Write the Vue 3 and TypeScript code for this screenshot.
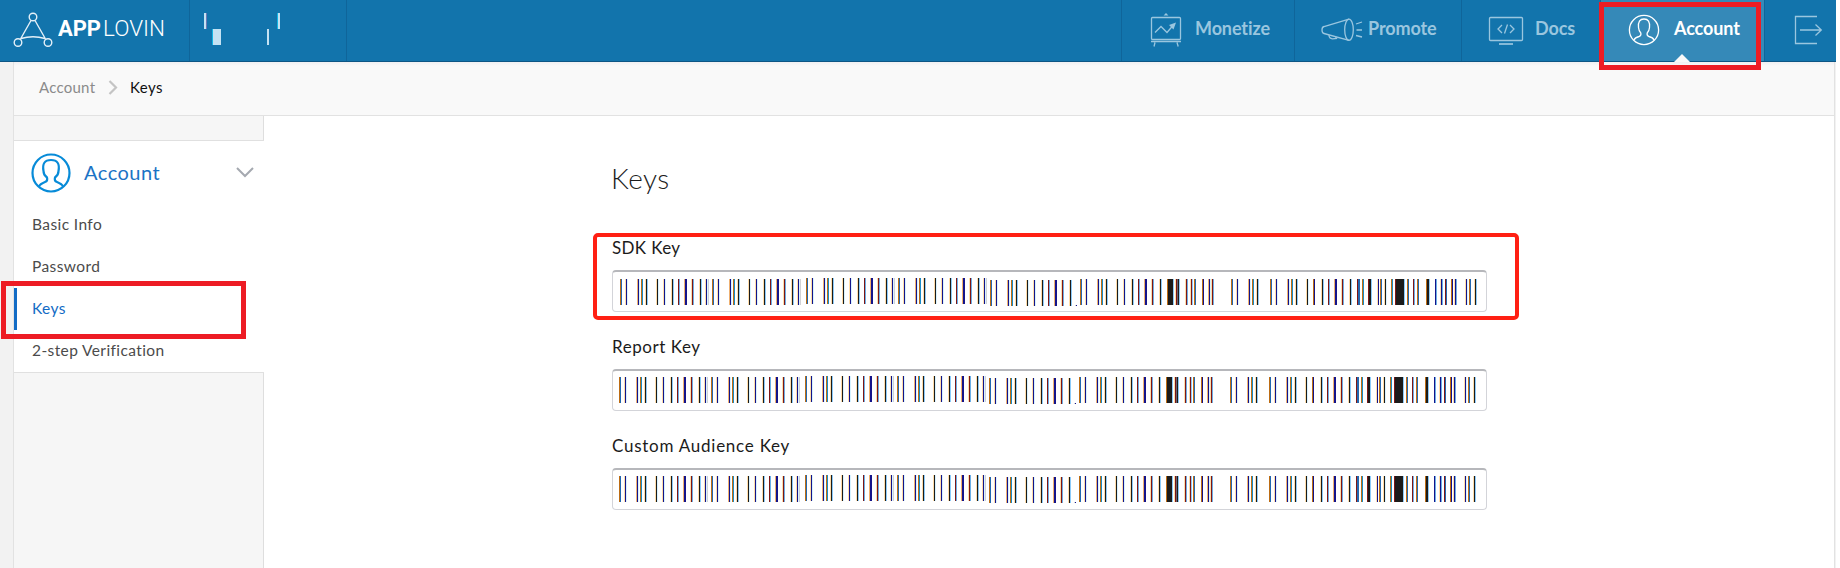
<script setup lang="ts">
type Bar = { x: number; y: number; w: number; h: number; fill: string }

const palette: Record<string, string> = {
  o: '#bd6d14', O: '#ffdca8', p: '#eeb070', n: '#14148a', k: '#1b1b1b', b: '#2468b0',
  c: '#1a8cc8', l: '#8ccbfa', y: '#d6f2ff', r: '#7e1616', t: '#6cafe6', g: '#d2d2d6', m: '#66626e',
}

const head: [number, string][] = [
  [0, 'ob'], [5, 'Ony'], [17, 'pny'], [21, 'oc'], [25, 'Okl'], [36, 'Oky'], [43, 'Ony'],
  [51, 'Okl'], [58, 'rt'], [64, 'pnn'], [71, 'Ort'], [79, 'Okl'], [85, 'Onyg'],
]
const tail: [number, string][] = [
  [547, 'okkkkkl'], [555, 'Ormkl'], [565, 'Ort'], [570, 'Orl'], [574, 'ob'], [582, 'on'],
  [588, 'pny'], [591, 'Ort'], [611, 'ob'], [616, 'Ony'], [628, 'pny'], [632, 'oc'], [636, 'Okl'],
  [650, 'ob'], [655, 'Ony'], [667, 'pny'], [671, 'oc'], [675, 'Okl'], [686, 'Oky'], [693, 'on'],
  [701, 'Okl'], [708, 'rt'], [714, 'pnn'], [721, 'Ort'], [729, 'Okl'], [737, 'rbb'], [742, 'oc'],
  [748, 'rkkl'], [757, 'On'], [760, 'ob'], [764, 'Oky'], [771, 'oc'], [775, 'rkkkkkkkkl'],
  [787, 'ob'], [793, 'rt'], [797, 'ob'], [806, 'okkl'], [815, 'nt'], [820, 'Ont'], [825, 'rb'],
  [831, 'on'], [834, 'Ont'], [845, 'Ony'], [849, 'ob'], [854, 'Okl'],
]

function makeBars(): Bar[] {
  const out: Bar[] = []
  const put = (x: number, y: number, code: string, h = 26) => {
    ;[...code].forEach((c, i) => out.push({ x: x + i, y, w: 1, h, fill: palette[c] }))
  }
  const groups: [number, number][] = [[0, 1], [92, 1], [186, 0], [278, 0], [370, 2], [460, 1]]
  groups.forEach(([x, y], gi) => {
    for (const [dx, code] of head) {
      if (gi >= 4 && dx === 85) continue
      put(x + dx, y, code)
    }
  })
  put(455, 27, 'gn', 1)
  for (const [x, code] of tail) put(x, 1, code)
  return out
}

const bars = makeBars()
const fields = [
  { label: 'SDK Key', cls: 'sdk' },
  { label: 'Report Key', cls: 'report' },
  { label: 'Custom Audience Key', cls: 'audience' },
]
const menu = [
  { label: 'Basic Info', cls: 'basic' },
  { label: 'Password', cls: 'password' },
  { label: 'Keys', cls: 'active' },
  { label: '2-step Verification', cls: 'verify' },
]
</script>

<template>
  <div class="page">
    <header class="topbar">
      <div class="brand">
        <svg width="40" height="36" viewBox="0 0 40 36" fill="none" stroke="#e4f0f8" stroke-width="1.4">
          <circle cx="20" cy="5" r="3.8" />
          <circle cx="5" cy="30.5" r="3.8" />
          <circle cx="35" cy="30.5" r="3.8" />
          <path d="M18 8.5 7.5 27M22 8.5 32.500 27M8 26.500Q20 23 32 26.500" />
        </svg>
        <svg class="wordmark" width="110" height="24" viewBox="0 0 110 24">
          <text x="0" y="19" class="word bold" textLength="43" lengthAdjust="spacingAndGlyphs">APP</text>
          <text x="45" y="19" class="word thin" textLength="62" lengthAdjust="spacingAndGlyphs">LOVIN</text>
        </svg>
      </div>
      <div class="user">
        <svg width="156" height="61" viewBox="190 0 156 61" shape-rendering="crispEdges">
          <path fill="#c4e2f3" d="M204 13h2v16h-2zM213 29h8v16h-8zM267 29h2v16h-2zM278 13h2v16h-2z" />
          <path fill="#6b78b4" d="M206 13h1v16h-1z" />
          <path fill="#10b4e4" d="M212 29h1v16h-1zM277 13h1v16h-1z" />
        </svg>
      </div>
      <nav class="nav">
        <a class="item monetize">
          <svg width="32" height="35" viewBox="0 0 32 35" fill="none" stroke="#9ac6df" stroke-width="1.3">
            <rect x="1.500" y="4.500" width="29" height="22" rx="1" />
            <path d="M1 28.500h30M5 29.500 4 33.500M27 29.500l1.200 4M5 19.500l6-6 6 6 6-7" />
            <path d="m19 12 7-2.500-2.500 7zM13.500 2.500 16 0l2.500 2.500z" fill="#9ac6df" stroke="none" />
          </svg>
          <span>Monetize</span>
        </a>
        <a class="item promote">
          <svg width="42" height="24" viewBox="0 0 42 24" fill="none" stroke="#9ac6df" stroke-width="1.3">
            <path d="M28 1.200 3 8.500Q1 9 1 12t2 3.500l25 6.800" />
            <ellipse cx="28" cy="11.800" rx="4.300" ry="10.600" />
            <path d="M8 17q0 3.500 3.500 3.800l4-.3-1-2M35 6l6-2M35.500 12H41M35 17.500l6 1.500" />
          </svg>
          <span>Promote</span>
        </a>
        <a class="item docs">
          <svg width="36" height="30" viewBox="0 0 36 30" fill="none" stroke="#9ac6df" stroke-width="1.3">
            <rect x="1.500" y="1.500" width="33" height="23" rx="1" />
            <path d="M11 28h14" stroke-width="1.700" />
            <path d="m14 9-4 4 4 4M22 9l4 4-4 4M19.500 8.500l-3 9" />
          </svg>
          <span>Docs</span>
        </a>
        <a class="item current">
          <svg width="32" height="32" viewBox="0 0 32 32" fill="none" stroke="#fff" stroke-width="1.300">
            <circle cx="16" cy="16" r="14.600" />
            <path d="M6 26q1-2.500 5-3.500 2.500-.7 1.800-3.500-2-2-2.300-5.500-.8-8.500 5.500-8.500t5.500 8.500q-.3 3.500-2.300 5.500-.7 2.800 1.800 3.500 4 1 5 3.500" />
          </svg>
          <span>Account</span>
          <i class="notch"></i>
        </a>
        <a class="item logout">
          <svg width="30" height="30" viewBox="0 0 30 30" fill="none" stroke="#9ac6df" stroke-width="1.300">
            <path d="M23 1.500H1.500v27H23M6 15h21M21.500 9.500 27.300 15l-5.800 5.500" />
          </svg>
        </a>
      </nav>
    </header>

    <div class="body">
      <div class="crumbs">
        <span class="parent">Account</span>
        <svg width="10" height="15" viewBox="0 0 10 15" fill="none" stroke="#c4c4c4" stroke-width="2.2"><path d="m1.500 1 6.500 6.500L1.500 14" /></svg>
        <span class="here">Keys</span>
      </div>
      <div class="columns">
        <aside class="side">
          <div class="panel">
            <div class="title">
              <svg width="40" height="40" viewBox="0 0 40 40" fill="none" stroke="#078bd8" stroke-width="2.2">
                <circle cx="20" cy="20" r="18.500" />
                <path d="M8 33.500q1-2.500 6-4.500 3-1 2-4.500-3.500-2.500-3.500-6.500Q10.500 7 20 7t7.500 11q0 4-3.500 6.500-1 3.500 2 4.500 5 2 6 4.500" />
              </svg>
              <span>Account</span>
              <svg class="chev" width="18" height="11" viewBox="0 0 18 11" fill="none" stroke="#a5a9b0" stroke-width="2"><path d="m1 1 8 8 8-8" /></svg>
            </div>
            <a v-for="m in menu" :key="m.label" class="link" :class="m.cls"><span>{{ m.label }}</span></a>
          </div>
        </aside>
        <main class="main">
          <h1>Keys</h1>
          <section v-for="f in fields" :key="f.label" class="field">
            <label :class="f.cls">{{ f.label }}</label>
            <div class="input" :class="f.cls">
              <svg width="860" height="30" viewBox="0 0 860 30" shape-rendering="crispEdges">
                <rect v-for="(b, i) in bars" :key="i" :x="b.x" :y="b.y" :width="b.w" :height="b.h" :fill="b.fill" />
              </svg>
            </div>
          </section>
        </main>
      </div>
    </div>

    <div class="mark mark-nav"></div>
    <div class="mark mark-side"></div>
    <div class="mark mark-sdk"></div>
  </div>
</template>

<style>
body { background: #fff; overflow: hidden; }
</style>

<style scoped>
* { box-sizing: border-box; }
.page { position: relative; width: 1840px; height: 568px; overflow: hidden; font-family: Lato, "Open Sans", sans-serif; color: #1b1b1b; }
.page svg { display: block; flex: none; }
.topbar { display: flex; width: 1836px; height: 62px; background: #1274ac; border-bottom: 1px solid #0d5685; }
.brand { display: flex; width: 190px; padding: 12px 0 0 13px; border-right: 1px solid #0f659a; }
.wordmark { margin: 5px 0 0 5px; }
.word { fill: #fff; font-size: 22px; font-family: Roboto, sans-serif; }
.bold { font-weight: 700; }
.thin { font-weight: 300; }
.user { width: 157px; border-right: 1px solid #0f659a; }
.nav { display: flex; margin-left: auto; }
.item { position: relative; display: flex; border-left: 1px solid #0f659a; color: #9ac6df; font-size: 18px; font-weight: 700; line-height: 22px; letter-spacing: -.1px; }
.item span { margin-top: 17px; white-space: nowrap; }
.monetize { width: 173px; padding-left: 28px; }
.monetize svg { margin-top: 13px; }
.monetize span { margin-left: 13px; }
.promote { width: 167px; padding-left: 26px; }
.promote svg { margin-top: 18px; }
.promote span { margin-left: 5px; }
.docs { width: 139px; padding-left: 26px; }
.docs svg { margin-top: 16px; }
.docs span { margin-left: 11px; }
.current { width: 164px; padding-left: 27px; background: #3589b8; color: #fff; }
.current svg { margin-top: 14px; }
.current span { margin-left: 14px; }
.notch { position: absolute; left: 73px; bottom: -1px; border: 8px solid transparent; border-top: 0; border-bottom-color: #f9f9f9; }
.logout { width: 72px; padding-left: 29px; }
.logout svg { margin-top: 15px; }
.body { width: 1836px; height: 506px; padding-left: 13px; background: #f2f2f2; }
.crumbs { display: flex; align-items: center; width: 1822px; height: 54px; padding: 0 0 2px 25px; background: linear-gradient(#f0f0f2, #f9f9f9 4px); border: solid #e2e2e2; border-width: 0 1px 1px; font-size: 15px; }
.crumbs span { position: relative; margin-bottom: 2px; }
.parent { width: 69px; color: #8b8b8b; letter-spacing: .25px; }
.here { margin-left: 12px; color: #111; letter-spacing: .4px; }
.columns { display: flex; width: 1822px; height: 452px; border: solid #e2e2e2; border-width: 0 1px; }
.side { width: 250px; padding-top: 24px; background: linear-gradient(#dedede, #dedede) right / 1px 100% no-repeat #f6f6f6; }
.panel { height: 233px; background: #fff; border: solid #e0e0e0; border-width: 1px 0; }
.title { display: flex; align-items: center; height: 63px; padding-left: 17px; color: #1b73c5; font-size: 20px; }
.title span { width: 152px; margin: 0 0 2px 13px; letter-spacing: .5px; }
.link { display: flex; align-items: center; height: 42px; padding: 0 0 2px 18px; color: #4b4b4b; font-size: 15.5px; letter-spacing: .4px; }
.active { padding-left: 15px; border-left: 3px solid #126bc5; color: #126bc5; }
.main { flex: 1; padding: 43px 0 0 348px; background: #fff; }
h1 { height: 73px; margin: 0 0 0 -1px; font-size: 28px; font-weight: 300; line-height: 38px; letter-spacing: .5px; }
.field { height: 99px; }
label { display: block; height: 38px; font-size: 17px; line-height: 32px; }
label.sdk { letter-spacing: .35px; }
label.report { letter-spacing: .55px; }
label.audience { letter-spacing: .75px; }
.input { width: 875px; height: 42px; border: 1px solid #d3d4d9; border-top: 2px solid #b6b7bb; border-radius: 4px; }
.input.sdk { padding: 6px 0 0 7px; }
.input.report, .input.audience { padding: 5px 0 0 6px; }
.mark { position: absolute; border: 5px solid #ed1c24; }
.mark-nav { left: 1599px; top: 2px; width: 162px; height: 68px; }
.mark-side { left: 1px; top: 281px; width: 245px; height: 58px; }
.mark-sdk { left: 593px; top: 233px; width: 926px; height: 87px; border: 4px solid #ff2013; border-radius: 5px; }
</style>
